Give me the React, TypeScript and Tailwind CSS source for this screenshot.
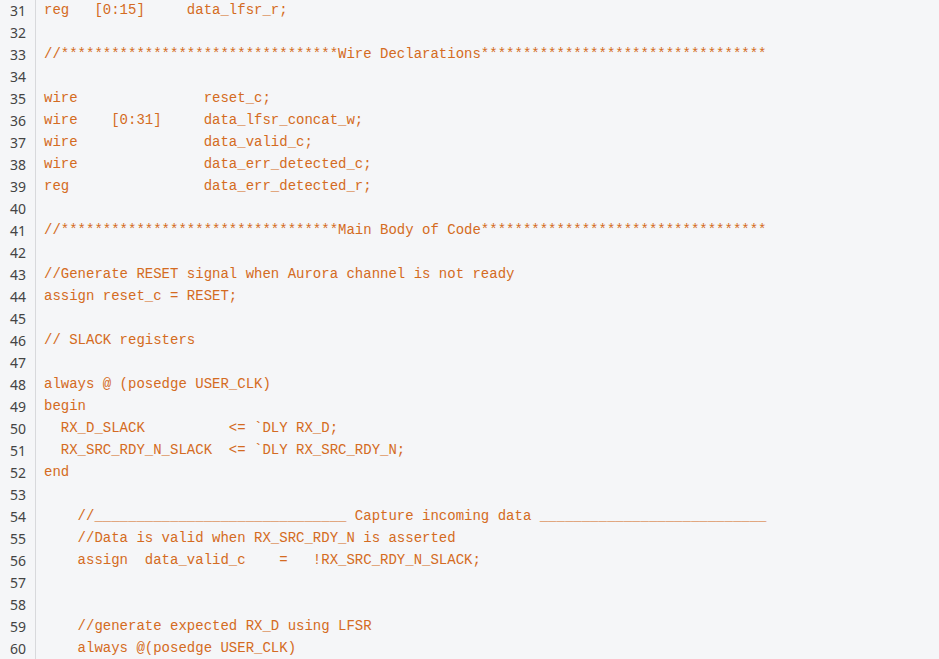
import React from "react";

const lines: [number, string][] = [
  [31, "reg   [0:15]     data_lfsr_r;"],
  [32, ""],
  [33, "//*********************************Wire Declarations**********************************"],
  [34, ""],
  [35, "wire               reset_c;"],
  [36, "wire    [0:31]     data_lfsr_concat_w;"],
  [37, "wire               data_valid_c;"],
  [38, "wire               data_err_detected_c;"],
  [39, "reg                data_err_detected_r;"],
  [40, ""],
  [41, "//*********************************Main Body of Code**********************************"],
  [42, ""],
  [43, "//Generate RESET signal when Aurora channel is not ready"],
  [44, "assign reset_c = RESET;"],
  [45, ""],
  [46, "// SLACK registers"],
  [47, ""],
  [48, "always @ (posedge USER_CLK)"],
  [49, "begin"],
  [50, "  RX_D_SLACK          <= `DLY RX_D;"],
  [51, "  RX_SRC_RDY_N_SLACK  <= `DLY RX_SRC_RDY_N;"],
  [52, "end"],
  [53, ""],
  [54, "    //______________________________ Capture incoming data ___________________________"],
  [55, "    //Data is valid when RX_SRC_RDY_N is asserted"],
  [56, "    assign  data_valid_c    =   !RX_SRC_RDY_N_SLACK;"],
  [57, ""],
  [58, ""],
  [59, "    //generate expected RX_D using LFSR"],
  [60, "    always @(posedge USER_CLK)"],
];

export default function App() {
  return (
    <div className="w-[939px] h-[659px] overflow-hidden bg-[#f5f6f8]">
      <div className="-mt-[1px] flex flex-col">
        {lines.map(([n, t]) => (
          <div key={n} className="flex h-[22px] items-center">
            <div
              className="w-[36px] h-full flex items-center justify-end pr-[9px] text-[14px] text-[#444] border-r border-[#d8d9dc]"
              style={{ fontFamily: '"Noto Sans", "Open Sans", sans-serif' }}
            >
              {n}
            </div>
            <pre
              className="pl-[8px] text-[14px] leading-[22px] text-[#d46b22] whitespace-pre"
              style={{ fontFamily: '"Liberation Mono", "DejaVu Sans Mono", monospace' }}
            >
              {t}
            </pre>
          </div>
        ))}
      </div>
    </div>
  );
}
